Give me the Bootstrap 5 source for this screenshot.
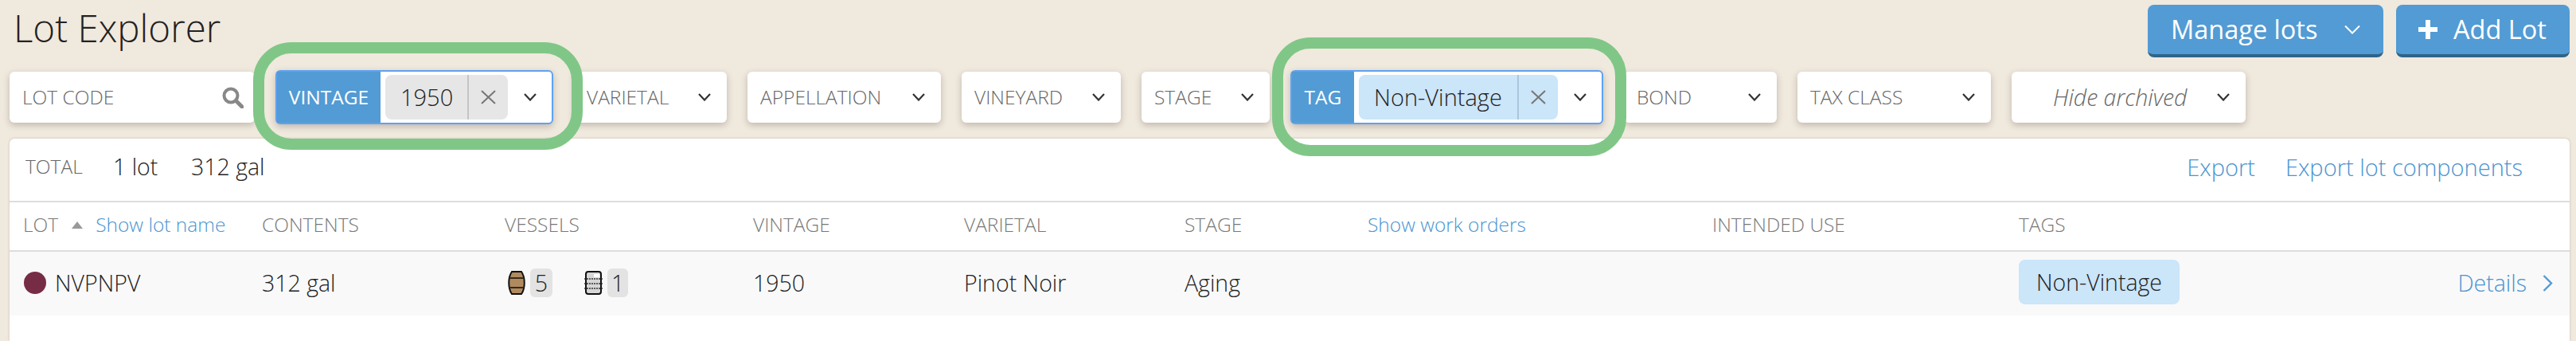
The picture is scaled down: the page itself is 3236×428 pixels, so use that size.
<!DOCTYPE html>
<html lang="en">
<head>
<meta charset="utf-8">
<title>Lot Explorer</title>
<link href="https://cdn.jsdelivr.net/npm/bootstrap@5.3.0/dist/css/bootstrap.min.css" rel="stylesheet">
<style>
  html, body { height: 428px; overflow: hidden; }
  body { background: #f0e9de; font-family: "Open Sans", "Liberation Sans", sans-serif; font-weight: 300; font-size: 28.5px; color: #222; }
  .shell { height: 428px; padding: 6px 8px 0 12px; }
  .topbar { height: 66px; margin-bottom: 18px; }
  .page-title { font-family: inherit; font-size: 47.5px; font-weight: 300; color: #222; margin: 0 0 0 5px; line-height: 57px; height: 57px; }
  .act-btn { background: #529bd4; color: #fff; border: 0; border-bottom: 4px solid #2f6488; border-radius: 8px; height: 66px; font-size: 32.5px; font-weight: 400; line-height: 1; padding: 0; }
  .act-btn:hover, .act-btn:focus { background: #529bd4; color: #fff; border-bottom-color: #2f6488; }
  .act-manage { width: 296px; padding-left: 29px; padding-right: 29px; }
  .act-add { width: 218px; padding-left: 28px; gap: 20px; }
  .filter-row { height: 64px; gap: 26px; margin-bottom: 20px; position: relative; z-index: 2; }
  .flt { background: #fff; border-radius: 6px; height: 64px; box-shadow: 0 3px 9px rgba(70,55,35,.28); font-size: 24.5px; color: #666; padding: 0 20px 0 16px; flex: none; }
  .flt-code { width: 308px; padding-right: 14px; }
  .flt-a { width: 192px; }
  .flt-b { width: 243px; }
  .flt-c { width: 200px; }
  .flt-d { width: 161px; }
  .flt-e { width: 294px; padding-left: 52px; font-size: 28.5px; font-style: italic; }
  .flt-on { position: relative; height: 68px; margin: -2px 0; border: 2px solid #5ea2f2; padding: 0; box-shadow: 0 3px 9px rgba(70,55,35,.28); }
  .flt-vintage { width: 349px; }
  .flt-tag { width: 393px; }
  .flt-name { background: #529bd4; color: #fff; height: 100%; font-weight: 400; font-size: 24.5px; flex: none; }
  .flt-vintage .flt-name { width: 130px; }
  .flt-tag .flt-name { width: 78px; }
  .chip { height: 56px; border-radius: 8px; margin-left: 6px; font-size: 29px; color: #222; flex: none; }
  .chip-grey { background: #e6e6e6; width: 154px; }
  .chip-blue { background: #cbe5f9; width: 250px; }
  .chip-text { padding-left: 19px; }
  .chip-grey .chip-text { width: 103px; }
  .chip-blue .chip-text { width: 199px; }
  .chip-x { border-left: 2px solid #c4c4c4; height: 100%; flex-grow: 1; }
  .chip-blue .chip-x { border-left-color: #a9c6da; }
  .flt-on .chev-slot { flex-grow: 1; }
  .ring { position: absolute; border: 14px solid #80c787; border-radius: 48px; pointer-events: none; z-index: 5; }
  .ring-vintage { left: -30px; right: -39px; top: -37px; bottom: -34px; }
  .ring-tag { left: -25px; right: -31px; top: -43px; bottom: -42px; }
  .panel { background: #fff; border-radius: 6px 6px 0 0; flex-grow: 1; box-shadow: 0 0 3px rgba(70,55,35,.25); }
  .summary { height: 78px; padding: 0 59px 7px 20px; }
  .sum-label { font-size: 24.5px; color: #666; width: 110px; }
  .sum-lots { width: 98px; }
  .sum-links { gap: 38px; font-size: 29px; }
  .act-link, .act-link:hover { color: #4a94d0; text-decoration: none; }
  .lot-table { table-layout: fixed; width: 100%; margin: 0; border-collapse: separate; border-spacing: 0; --bs-table-bg: transparent; --bs-table-color: #222; color: #222; }
  .lot-table > :not(caption) > * > * { padding: 0 0 0 17px; border: 0; box-shadow: none; vertical-align: middle; background: transparent; }
  .lot-table > thead > tr > th { height: 62px; border-top: 2px solid #ddd; font-weight: 300; font-size: 24.5px; color: #777; padding-bottom: 3px; }
  .lot-table > tbody > tr > td { height: 82px; border-top: 2px solid #ddd; background: #f9f9f9; padding-bottom: 2px; }
  .lot-table > tbody { border-top: 0; }
  .c1 { width: 300px; } .c2 { width: 305px; } .c3 { width: 312px; } .c4 { width: 265px; } .c5 { width: 277px; }
  .c6 { width: 230px; } .c7 { width: 433px; } .c8 { width: 385px; } .c9 { width: 709px; }
  .sort-arrow { margin: 0 16px 0 17px; flex: none; }
  .lot-dot { width: 28px; height: 28px; border-radius: 50%; background: #772c45; margin: 0 11px 0 1px; flex: none; }
  .vessel-count { background: #e3e3e3; border-radius: 6px; height: 36px; padding: 0 5px; margin-left: 6px; min-width: 26px; text-align: center; line-height: 36px; }
  .vessel-5 { width: 28px; }
  .vessel-gap { margin-right: 40px; }
  .tag-pill { background: #cbe5f9; border-radius: 8px; width: 202px; height: 56px; margin-top: -2px; flex: none; }
  .detail-link { gap: 20px; padding-right: 21px; }
</style>
</head>
<body>
<div class="shell d-flex flex-column">
  <div class="topbar d-flex justify-content-between align-items-start">
    <h1 class="page-title">Lot Explorer</h1>
    <div class="d-flex gap-3">
      <button type="button" class="btn act-btn act-manage d-flex align-items-center justify-content-between">
        <span>Manage lots</span>
        <svg width="20" height="12" viewBox="0 0 20 12" fill="none" stroke="#fff" stroke-width="2"><path d="M1 1.5 10 10.5 19 1.5"/></svg>
      </button>
      <button type="button" class="btn act-btn act-add d-flex align-items-center">
        <svg width="24" height="24" viewBox="0 0 24 24" fill="#fff"><path d="M9 0h6v9h9v6h-9v9H9v-9H0V9h9z"/></svg>
        <span>Add Lot</span>
      </button>
    </div>
  </div>

  <div class="filter-row d-flex align-items-center">
    <div class="flt flt-code d-flex align-items-center justify-content-between">
      <span>LOT CODE</span>
      <svg width="27" height="27" viewBox="0 0 27 27" fill="none" stroke="#888" stroke-width="4"><circle cx="11" cy="11" r="8.5"/><path d="M17.5 17.5 25 25" stroke-width="5" stroke-linecap="round"/></svg>
    </div>
    <div class="flt flt-on flt-vintage d-flex align-items-center">
      <span class="flt-name d-flex align-items-center justify-content-center">VINTAGE</span>
      <div class="chip chip-grey d-flex align-items-center">
        <span class="chip-text">1950</span>
        <span class="chip-x d-flex align-items-center justify-content-center"><svg width="19" height="18" viewBox="0 0 19 18" fill="none" stroke="#777" stroke-width="2"><path d="M1 1 18 17M18 1 1 17"/></svg></span>
      </div>
      <span class="chev-slot d-flex justify-content-center"><svg width="16" height="10" viewBox="0 0 16 10" fill="none" stroke="#333" stroke-width="2.2"><path d="M1 1 8 8.5 15 1"/></svg></span>
      <span class="ring ring-vintage"></span>
    </div>
    <div class="flt flt-a d-flex align-items-center justify-content-between"><span>VARIETAL</span><svg width="16" height="10" viewBox="0 0 16 10" fill="none" stroke="#333" stroke-width="2.2"><path d="M1 1 8 8.5 15 1"/></svg></div>
    <div class="flt flt-b d-flex align-items-center justify-content-between"><span>APPELLATION</span><svg width="16" height="10" viewBox="0 0 16 10" fill="none" stroke="#333" stroke-width="2.2"><path d="M1 1 8 8.5 15 1"/></svg></div>
    <div class="flt flt-c d-flex align-items-center justify-content-between"><span>VINEYARD</span><svg width="16" height="10" viewBox="0 0 16 10" fill="none" stroke="#333" stroke-width="2.2"><path d="M1 1 8 8.5 15 1"/></svg></div>
    <div class="flt flt-d d-flex align-items-center justify-content-between"><span>STAGE</span><svg width="16" height="10" viewBox="0 0 16 10" fill="none" stroke="#333" stroke-width="2.2"><path d="M1 1 8 8.5 15 1"/></svg></div>
    <div class="flt flt-on flt-tag d-flex align-items-center">
      <span class="flt-name d-flex align-items-center justify-content-center">TAG</span>
      <div class="chip chip-blue d-flex align-items-center">
        <span class="chip-text">Non-Vintage</span>
        <span class="chip-x d-flex align-items-center justify-content-center"><svg width="19" height="18" viewBox="0 0 19 18" fill="none" stroke="#777" stroke-width="2"><path d="M1 1 18 17M18 1 1 17"/></svg></span>
      </div>
      <span class="chev-slot d-flex justify-content-center"><svg width="16" height="10" viewBox="0 0 16 10" fill="none" stroke="#333" stroke-width="2.2"><path d="M1 1 8 8.5 15 1"/></svg></span>
      <span class="ring ring-tag"></span>
    </div>
    <div class="flt flt-a d-flex align-items-center justify-content-between"><span>BOND</span><svg width="16" height="10" viewBox="0 0 16 10" fill="none" stroke="#333" stroke-width="2.2"><path d="M1 1 8 8.5 15 1"/></svg></div>
    <div class="flt flt-b d-flex align-items-center justify-content-between"><span>TAX CLASS</span><svg width="16" height="10" viewBox="0 0 16 10" fill="none" stroke="#333" stroke-width="2.2"><path d="M1 1 8 8.5 15 1"/></svg></div>
    <div class="flt flt-e d-flex align-items-center justify-content-between"><span>Hide archived</span><svg width="16" height="10" viewBox="0 0 16 10" fill="none" stroke="#333" stroke-width="2.2"><path d="M1 1 8 8.5 15 1"/></svg></div>
  </div>

  <div class="panel">
    <div class="summary d-flex align-items-center justify-content-between">
      <div class="d-flex align-items-center">
        <span class="sum-label">TOTAL</span>
        <span class="sum-lots">1 lot</span>
        <span>312 gal</span>
      </div>
      <div class="sum-links d-flex">
        <a class="act-link" href="#">Export</a>
        <a class="act-link" href="#">Export lot components</a>
      </div>
    </div>
    <table class="table lot-table">
      <colgroup><col class="c1"><col class="c2"><col class="c3"><col class="c4"><col class="c5"><col class="c6"><col class="c7"><col class="c8"><col class="c9"></colgroup>
      <thead>
        <tr>
          <th><div class="d-flex align-items-center"><span>LOT</span><svg class="sort-arrow" width="14" height="9" viewBox="0 0 14 9" fill="#999"><path d="M7 0 14 9H0z"/></svg><a class="act-link" href="#">Show lot name</a></div></th>
          <th>CONTENTS</th>
          <th>VESSELS</th>
          <th>VINTAGE</th>
          <th>VARIETAL</th>
          <th>STAGE</th>
          <th><a class="act-link" href="#">Show work orders</a></th>
          <th>INTENDED USE</th>
          <th>TAGS</th>
        </tr>
      </thead>
      <tbody>
        <tr>
          <td><div class="d-flex align-items-center"><span class="lot-dot"></span><span>NVPNPV</span></div></td>
          <td>312 gal</td>
          <td>
            <div class="d-flex align-items-center ps-1">
              <svg width="22" height="30" viewBox="0 0 22 30"><path d="M5 1h12c5 7 5 21 0 28H5C0 22 0 8 5 1z" fill="#b08a5f" stroke="#111" stroke-width="2"/><path d="M2.2 9h17.600M2.200 21h17.600" stroke="#3a2a18" stroke-width="2"/></svg>
              <span class="vessel-count vessel-5 vessel-gap">5</span>
              <svg width="23" height="30" viewBox="0 0 23 30"><rect x="2" y="1" width="19" height="28" rx="3" fill="#d6d6d6" stroke="#111" stroke-width="2"/><rect x="12" y="4" width="7" height="4" fill="#fff"/><path d="M0 10h23M0 16h23M0 22h23" stroke="#333" stroke-width="1.500" stroke-dasharray="2 1"/></svg>
              <span class="vessel-count">1</span>
            </div>
          </td>
          <td>1950</td>
          <td>Pinot Noir</td>
          <td>Aging</td>
          <td></td>
          <td></td>
          <td>
            <div class="d-flex align-items-center justify-content-between">
              <span class="tag-pill d-flex align-items-center justify-content-center">Non-Vintage</span>
              <a class="act-link detail-link d-flex align-items-center" href="#"><span>Details</span><svg width="13" height="21" viewBox="0 0 13 21" fill="none" stroke="#529bd4" stroke-width="2.400"><path d="M1.500 1 11 10.500 1.500 20"/></svg></a>
            </div>
          </td>
        </tr>
      </tbody>
    </table>
  </div>
</div>
</body>
</html>
